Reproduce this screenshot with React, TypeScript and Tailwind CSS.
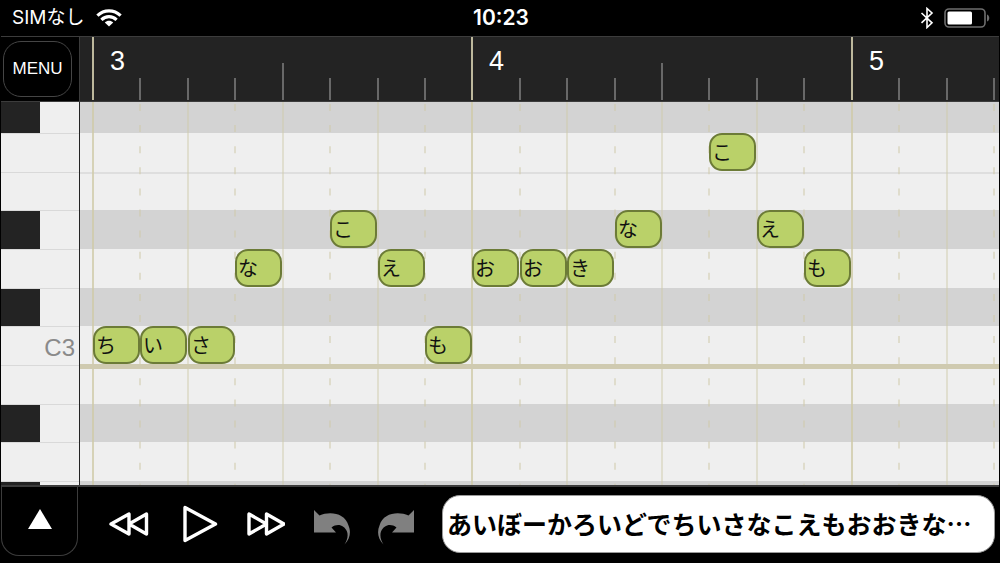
import { useState } from "react";

interface Note {
  step: number;
  row: number;
  lyric: string;
}

const NOTES: Note[] = [
  { step: 0, row: 6, lyric: "ち" },
  { step: 1, row: 6, lyric: "い" },
  { step: 2, row: 6, lyric: "さ" },
  { step: 3, row: 4, lyric: "な" },
  { step: 5, row: 3, lyric: "こ" },
  { step: 6, row: 4, lyric: "え" },
  { step: 7, row: 6, lyric: "も" },
  { step: 8, row: 4, lyric: "お" },
  { step: 9, row: 4, lyric: "お" },
  { step: 10, row: 4, lyric: "き" },
  { step: 11, row: 3, lyric: "な" },
  { step: 13, row: 1, lyric: "こ" },
  { step: 14, row: 3, lyric: "え" },
  { step: 15, row: 4, lyric: "も" },
];

// rows are listed from the highest pitch to the lowest
const ROWS = [
  { black: true },
  { black: false },
  { black: false },
  { black: true },
  { black: false },
  { black: true },
  { black: false, label: "C3" },
  { black: false },
  { black: true },
  { black: false },
  { black: true },
];

const FIRST_BAR = 3;
const BAR_COUNT = 3;
const STEPS_PER_BAR = 8;
const STEPS = Array.from({ length: 64 }, (_, i) => i);

const stepX = (step: number) => Math.round(12 + (step * 1138) / 24);
// the roll is scrolled a few pixels into its first row
const rowY = (row: number) =>
  row === 0 ? 0 : Math.round(31 + ((row - 1) * 116) / 3);
const rowHeight = (row: number) => rowY(row + 1) - rowY(row);

/* ============================
    Status bar
============================ */

function StatusBar() {
  return (
    <header className="flex h-9 shrink-0 items-center justify-between bg-black pl-3 pr-2.5 text-white">
      <div className="flex flex-1 items-center gap-3">
        <span className="font-['Inter','Noto_Sans_CJK_JP',sans-serif] text-[19px] leading-6">
          SIMなし
        </span>
        <svg width="26" height="18" viewBox="0 0 26 18" aria-label="Wi-Fi">
          <g fill="none" stroke="#fff" strokeWidth="3.2">
            <path d="M1.4 6.6C8 .2 18 .2 24.600 6.600" />
            <path d="M5.400 10.800c4.200-4.200 11-4.200 15.200 0" />
          </g>
          <path d="M13 17.600 8.800 13.400c2.400-2.200 6-2.200 8.400 0z" fill="#fff" />
        </svg>
      </div>
      <time className="font-['Inter',sans-serif] text-[21px] font-semibold leading-6">
        10:23
      </time>
      <div className="flex flex-1 items-center justify-end gap-2.5">
        <svg width="14" height="22" viewBox="0 0 14 22" aria-label="Bluetooth">
          <path
            d="M1.500 6 12 15.800 7 20.500V1.500L12 6 1.500 15.800"
            fill="none"
            stroke="#fff"
            strokeWidth="1.6"
          />
        </svg>
        <svg width="46" height="20" viewBox="0 0 46 20" aria-label="Battery">
          <rect x="1" y="1" width="40" height="18" rx="4" fill="none" stroke="#6e6e6e" strokeWidth="1.6" />
          <rect x="3.500" y="3.500" width="24.500" height="13" rx="1.500" fill="#fff" />
          <path d="M43 6.500c3 1 3 6 0 7z" fill="#6e6e6e" />
        </svg>
      </div>
    </header>
  );
}

/* ============================
    Ruler
============================ */

function Ruler() {
  return (
    <div className="flex h-[66px] shrink-0 border-y border-[#3c3c3c] bg-[#232323]">
      <div className="flex w-[79px] shrink-0 border-r border-[#3c3c3c] bg-black py-1 pl-0.5">
        <button className="h-14 w-[69px] rounded-[18px] border border-[#454545] font-['Liberation_Sans',Arial,sans-serif] text-[17px] text-white">
          MENU
        </button>
      </div>
      <svg className="h-full min-w-0 flex-1" aria-label="Bars">
        {STEPS.map((i) => {
          const x = stepX(i);
          const bar = i % STEPS_PER_BAR === 0;
          const half = i % STEPS_PER_BAR === 4;
          return (
            <rect
              key={i}
              x={x}
              y={bar ? 0 : half ? 26 : 41}
              width="2"
              height={bar ? 63 : half ? 37 : 22}
              fill={bar ? "#bdb89c" : "#686868"}
            />
          );
        })}
        {Array.from({ length: BAR_COUNT }, (_, i) => (
          <text
            key={i}
            x={stepX(i * STEPS_PER_BAR) + 18}
            y="33"
            fill="#fff"
            className="font-['Liberation_Sans',Arial,sans-serif] text-[27px]"
          >
            {FIRST_BAR + i}
          </text>
        ))}
      </svg>
    </div>
  );
}

/* ============================
    Piano roll
============================ */

function Keyboard() {
  return (
    <div className="w-[79px] shrink-0 border-r border-[#232323] bg-[#efefef]">
      {ROWS.map((row, i) => (
        <div
          key={i}
          className="flex items-center justify-between border-t border-[#d9d9d9] first:border-t-0"
          style={{ height: rowHeight(i) }}
        >
          {row.black && <div className="h-full w-[39px] bg-[#232323]" />}
          {row.label && (
            <span className="ml-auto pr-1 pt-1 font-['Liberation_Sans',Arial,sans-serif] text-[24px] leading-8 text-[#8a8a8a]">
              {row.label}
            </span>
          )}
        </div>
      ))}
    </div>
  );
}

function GridLines() {
  return (
    <svg className="absolute inset-0 h-full w-full" aria-hidden="true">
      {STEPS.map((i) => {
        const x = stepX(i) + 1;
        if (i % 2 === 1) {
          return (
            <line
              key={i}
              x1={x}
              x2={x}
              y1="2"
              y2="600"
              stroke="#cfcaa9"
              strokeOpacity="0.5"
              strokeWidth="2"
              strokeDasharray="7 14.1"
            />
          );
        }
        return (
          <line
            key={i}
            x1={x}
            x2={x}
            y1="0"
            y2="600"
            stroke="#cfcaa9"
            strokeOpacity={i % STEPS_PER_BAR === 0 ? 0.8 : 0.45}
            strokeWidth="2"
          />
        );
      })}
    </svg>
  );
}

function Roll() {
  return (
    <div className="relative min-w-0 flex-1 overflow-hidden bg-[#efefef]">
      {ROWS.map((row, i) => {
        const prev = ROWS[i - 1];
        const split = !row.black && prev && !prev.black;
        return (
          <div
            key={i}
            className={
              row.black
                ? "bg-[#d3d3d3]"
                : split
                  ? "border-t-2 border-[#dedede]"
                  : ""
            }
            style={{ height: rowHeight(i) }}
          />
        );
      })}
      <GridLines />
      <div
        className="absolute inset-x-0 h-[5px] bg-[#cfcab0]"
        style={{ top: rowY(7) - 1 }}
      />
      {NOTES.map((note) => (
        <button
          key={note.step}
          className="absolute flex h-[38px] w-[47px] items-center rounded-[13px] border-2 border-[#6c7b37] bg-[#bad169] pl-px font-['Noto_Sans_CJK_JP',sans-serif] text-[20px] leading-6 text-[#111]"
          style={{ left: stepX(note.step) + 1, top: rowY(note.row) }}
        >
          {note.lyric}
        </button>
      ))}
    </div>
  );
}

/* ============================
    Transport
============================ */

function Transport() {
  const [lyrics, setLyrics] = useState(
    "あいぼーかろいどでちいさなこえもおおきな…"
  );

  return (
    <footer className="flex h-[78px] shrink-0 items-start border-t-2 border-[#3c3c3c] bg-black">
      <button
        aria-label="Expand"
        className="flex h-[69px] w-[77px] shrink-0 items-center justify-center rounded-b-[18px] border border-t-0 border-[#3c3c3c]"
      >
        <svg width="24" height="20" viewBox="0 0 24 20" className="mb-1">
          <path d="M12 0 24 20H0z" fill="#fff" />
        </svg>
      </button>
      <div className="flex h-[73px] min-w-0 flex-1 items-center gap-7 pl-[31px] pr-1">
        <button aria-label="Rewind" className="shrink-0">
          <svg width="40" height="26" viewBox="0 0 40 26" fill="none" stroke="#fff" strokeWidth="3.400" strokeLinejoin="round">
            <path d="M20 3v20L2 13zM37.500 3v20L20 13z" />
          </svg>
        </button>
        <button aria-label="Play" className="shrink-0">
          <svg width="42" height="40" viewBox="0 0 42 40" fill="none" stroke="#fff" strokeWidth="3.400" strokeLinejoin="round">
            <path d="M8 3.500v33L38.500 20z" />
          </svg>
        </button>
        <button aria-label="Fast forward" className="shrink-0">
          <svg width="38" height="26" viewBox="0 0 38 26" fill="none" stroke="#fff" strokeWidth="3.400" strokeLinejoin="round">
            <path d="M2 3v20l17.500-10zM19.500 3v20L37 13z" />
          </svg>
        </button>
        <button aria-label="Undo" className="shrink-0">
          <svg width="37" height="42" viewBox="0 0 37 42" fill="#808080">
            <path d="M1 7v22.500h22l-4.500-5C24.500 20 31 22 34 28.500c1.500 4.500 0 9-2.500 13 6-6 6.500-13 4-19C32 10 17 8 6.500 12.500z" />
          </svg>
        </button>
        <button aria-label="Redo" className="shrink-0">
          <svg width="36" height="42" viewBox="1 0 36 42" fill="#808080">
            <path d="M37 7v22.500H15l4.500-5C13.500 20 7 22 4 28.500c-1.500 4.500 0 9 2.500 13C.5 35.500 0 28.500 2.500 22.500 6 10 21 8 31.500 12.500z" />
          </svg>
        </button>
        <input
          type="text"
          aria-label="Lyrics"
          value={lyrics}
          onChange={(e) => setLyrics(e.target.value)}
          className="h-[58px] min-w-0 flex-1 rounded-[18px] border border-[#9a9a9a] bg-white px-1 pb-0.5 font-['Noto_Sans_CJK_JP',sans-serif] text-[25px] font-bold text-black"
        />
      </div>
    </footer>
  );
}

export default function App() {
  return (
    <div className="flex h-screen flex-col overflow-hidden bg-black">
      <StatusBar />
      <main className="flex min-h-0 flex-1 flex-col px-px">
        <Ruler />
        <div className="flex min-h-0 flex-1 overflow-hidden">
          <Keyboard />
          <Roll />
        </div>
        <Transport />
      </main>
    </div>
  );
}
